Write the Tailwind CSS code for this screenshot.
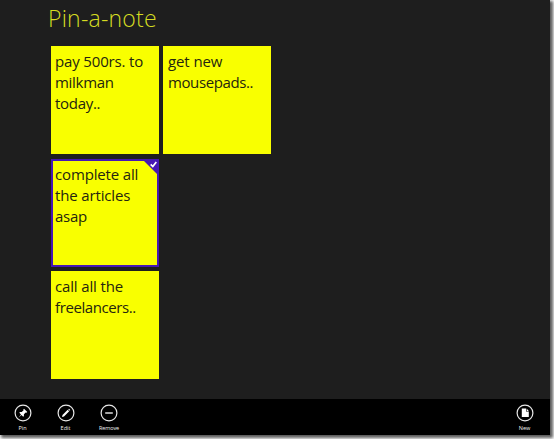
<!DOCTYPE html>
<html lang="en">
<head>
<meta charset="utf-8">
<title>Pin-a-note</title>
<script src="https://cdn.jsdelivr.net/npm/@tailwindcss/browser@4"></script>
</head>
<body class="h-[439px] w-[554px] overflow-hidden bg-white font-['Open_Sans','Noto_Sans',sans-serif]">
<div class="flex h-[435px] w-[550px] flex-col bg-[#1e1e1e] shadow-[2px_2px_3px_1px_rgba(0,0,0,0.65)]">
  <main class="flex-1 pl-[51px]">
    <h1 class="-ml-[3px] h-[46px] pt-[3px] text-[23px] leading-[31px] font-light whitespace-nowrap text-[#d5dc22]"><span class="tracking-[0.22px]">Pin-a-note</span></h1>
    <div class="grid w-[221px] grid-cols-[108px_108px] grid-rows-[108px_108px_108px] gap-x-[4px] gap-y-[4.5px] text-[15px] leading-[21px] whitespace-nowrap text-[#25250f]">
      <section class="bg-[#f9ff00] pt-[5px] pl-[4px]"><p><span class="tracking-[-0.15px]">pay 500rs. to</span><br><span class="tracking-[-0.3px]">milkman</span><br><span class="tracking-[-0.3px]">today..</span></p></section>
      <section class="bg-[#f9ff00] pt-[5px] pl-[5px]"><p><span class="tracking-[-0.1px]">get new</span><br><span class="tracking-[-0.4px]">mousepads..</span></p></section>
      <section class="relative col-start-1 border-2 border-[#4617b4] bg-[#f9ff00] pt-[3px] pl-[2px]"><p><span class="tracking-[-0.15px]">complete all</span><br><span class="tracking-[-0.15px]">the articles</span><br><span class="tracking-[-0.3px]">asap</span></p>
        <svg class="absolute -top-[2px] -right-[2px]" width="17" height="17" viewBox="0 0 17 17"><path d="M0 0H17V17Z" fill="#4617b4"/><path d="M8.7 5.4L10.8 7.5L14.3 3" fill="none" stroke="#fff" stroke-width="1.7"/></svg>
      </section>
      <section class="col-start-1 bg-[#f9ff00] pt-[5px] pl-[4px]"><p><span class="tracking-[-0.15px]">call all the</span><br><span class="tracking-[-0.4px]">freelancers..</span></p></section>
    </div>
  </main>
  <footer class="flex h-[36px] justify-between bg-black pt-[5px] pr-[4px] pl-[1px] text-[5.5px] leading-[8px] text-[#f0f0f0]">
    <div class="flex">
      <div class="flex w-[43px] flex-col items-center gap-[2px]">
        <svg width="18" height="18" viewBox="0 0 18 18"><circle cx="9" cy="9" r="7.9" fill="none" stroke="#e8e8e8" stroke-width="1.2"/><path d="M10 4.7L13.3 8L12.4 8.7L11.7 8.4L9.9 10.3L9.9 12L9.2 12.7L7.5 11L4.6 13.4L7 10.5L5.3 8.8L6 8.1L7.7 8.1L9.6 6.3L9.3 5.6Z" fill="#fff"/></svg>
        <span>Pin</span>
      </div>
      <div class="flex w-[43px] flex-col items-center gap-[2px]">
        <svg width="18" height="18" viewBox="0 0 18 18"><circle cx="9" cy="9" r="7.9" fill="none" stroke="#e8e8e8" stroke-width="1.2"/><path d="M5 13L5.5 11L10.7 5.8L12.2 7.3L7 12.5ZM11.2 5.3L12 4.7L13.3 6L12.7 6.8Z" fill="#fff"/></svg>
        <span>Edit</span>
      </div>
      <div class="flex w-[44px] flex-col items-center gap-[2px]">
        <svg width="18" height="18" viewBox="0 0 18 18"><circle cx="9" cy="9" r="7.9" fill="none" stroke="#e8e8e8" stroke-width="1.2"/><path d="M5.2 9H12.8" stroke="#fff" stroke-width="1.3"/></svg>
        <span class="tracking-[-0.1px]">Remove</span>
      </div>
    </div>
    <div class="flex w-[43px] flex-col items-center gap-[2px]">
      <svg width="18" height="18" viewBox="0 0 18 18"><circle cx="9" cy="9" r="7.9" fill="none" stroke="#e8e8e8" stroke-width="1.2"/><path d="M5.8 4.6H10V7.5H12.8V13H5.8ZM10.6 4.6L12.8 6.9H10.6Z" fill="#fff"/></svg>
      <span>New</span>
    </div>
  </footer>
</div>
</body>
</html>
